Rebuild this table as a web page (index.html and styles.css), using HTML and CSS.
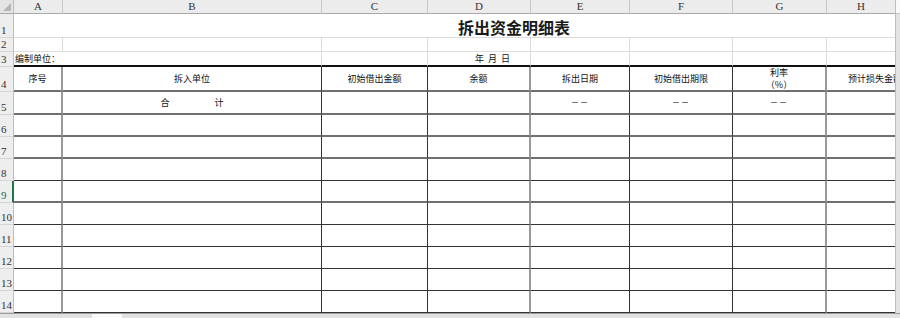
FILE: index.html
```html
<!DOCTYPE html>
<html lang="zh-CN">
<head>
<meta charset="utf-8">
<title>拆出资金明细表</title>
<link rel="stylesheet" href="styles.css">
</head>
<body>
<div class="sheet">
  <div class="main">
    <div class="view">
      <div class="grid">
        <div class="row hdr">
          <div class="corner"><span class="tri"></span></div>
          <div class="ch">A</div><div class="ch">B</div><div class="ch">C</div><div class="ch">D</div>
          <div class="ch">E</div><div class="ch">F</div><div class="ch">G</div><div class="ch">H</div>
        </div>
        <div class="row">
          <div class="rh">1</div>
          <div class="c title">拆出资金明细表</div>
        </div>
        <div class="row g">
          <div class="rh">2</div>
          <div class="c"></div><div class="c"></div><div class="c"></div><div class="c"></div>
          <div class="c"></div><div class="c"></div><div class="c"></div><div class="c"></div>
        </div>
        <div class="row g r3">
          <div class="rh">3</div>
          <div class="c unit">编制单位：</div>
          <div class="c"></div>
          <div class="c date">年 &nbsp;月 &nbsp;日</div>
          <div class="c"></div><div class="c"></div><div class="c"></div><div class="c"></div>
        </div>
        <div class="row tbl soft head">
          <div class="rh">4</div>
          <div class="c">序号</div>
          <div class="c">拆入单位</div>
          <div class="c">初始借出金额</div>
          <div class="c">余额</div>
          <div class="c">拆出日期</div>
          <div class="c">初始借出期限</div>
          <div class="c two"><span>利率</span><span>（%）</span></div>
          <div class="c clip"><span class="hv">预计损失金额</span></div>
        </div>
        <div class="row tbl soft">
          <div class="rh">5</div>
          <div class="c"></div>
          <div class="c total">合 计</div>
          <div class="c"></div><div class="c"></div>
          <div class="c dash">－－</div>
          <div class="c dash">－－</div>
          <div class="c dash">－－</div>
          <div class="c"></div>
        </div>
        <div class="row tbl soft">
          <div class="rh">6</div>
          <div class="c"></div><div class="c"></div><div class="c"></div><div class="c"></div>
          <div class="c"></div><div class="c"></div><div class="c"></div><div class="c"></div>
        </div>
        <div class="row tbl soft">
          <div class="rh">7</div>
          <div class="c"></div><div class="c"></div><div class="c"></div><div class="c"></div>
          <div class="c"></div><div class="c"></div><div class="c"></div><div class="c"></div>
        </div>
        <div class="row tbl">
          <div class="rh">8</div>
          <div class="c"></div><div class="c"></div><div class="c"></div><div class="c"></div>
          <div class="c"></div><div class="c"></div><div class="c"></div><div class="c"></div>
        </div>
        <div class="row tbl soft sel">
          <div class="rh">9</div>
          <div class="c"></div><div class="c"></div><div class="c"></div><div class="c"></div>
          <div class="c"></div><div class="c"></div><div class="c"></div><div class="c"></div>
        </div>
        <div class="row tbl">
          <div class="rh">10</div>
          <div class="c"></div><div class="c"></div><div class="c"></div><div class="c"></div>
          <div class="c"></div><div class="c"></div><div class="c"></div><div class="c"></div>
        </div>
        <div class="row tbl">
          <div class="rh">11</div>
          <div class="c"></div><div class="c"></div><div class="c"></div><div class="c"></div>
          <div class="c"></div><div class="c"></div><div class="c"></div><div class="c"></div>
        </div>
        <div class="row tbl">
          <div class="rh">12</div>
          <div class="c"></div><div class="c"></div><div class="c"></div><div class="c"></div>
          <div class="c"></div><div class="c"></div><div class="c"></div><div class="c"></div>
        </div>
        <div class="row tbl">
          <div class="rh">13</div>
          <div class="c"></div><div class="c"></div><div class="c"></div><div class="c"></div>
          <div class="c"></div><div class="c"></div><div class="c"></div><div class="c"></div>
        </div>
        <div class="row tbl">
          <div class="rh">14</div>
          <div class="c"></div><div class="c"></div><div class="c"></div><div class="c"></div>
          <div class="c"></div><div class="c"></div><div class="c"></div><div class="c"></div>
        </div>
      </div>
    </div>
    <div class="vscroll"><span class="vtop"></span><span class="vbot"></span></div>
  </div>
  <div class="hstrip"><span class="tabgap"></span><span class="tab"></span></div>
</div>
</body>
</html>
```

FILE: styles.css
```css
* { box-sizing: border-box; }
html, body {
  margin: 0;
  padding: 0;
  width: 900px;
  height: 318px;
  overflow: hidden;
  background: #fff;
}
.sheet {
  display: flex;
  flex-direction: column;
  width: 900px;
  height: 318px;
  font-family: "Noto Sans CJK SC", "Noto Sans", sans-serif;
  color: #111;
}
.main {
  display: flex;
  height: 313px;
}
.view {
  width: 895px;
  height: 313px;
  overflow: hidden;
}
.grid {
  display: grid;
  grid-template-columns: 14px 49px 259px 106px 103px 99px 103px 94px 69px;
  grid-template-rows: 14px 24px 14px 15px 25px 23px repeat(9, 22px);
  width: 896px;
}
.row { display: contents; }

/* headers */
.corner {
  background: #e4e4e4;
  border-right: 1px solid #bdbdbd;
  border-bottom: 1px solid #a9a9a9;
  display: flex;
  align-items: flex-end;
  justify-content: flex-end;
  padding: 0 2px 2px 0;
}
.tri {
  width: 0;
  height: 0;
  border-left: 8px solid transparent;
  border-bottom: 8px solid #b5b5b5;
}
.ch {
  background: #ececec;
  border-right: 1px solid #c9c9c9;
  border-bottom: 1px solid #a9a9a9;
  font-family: "Liberation Serif", serif;
  font-size: 11px;
  line-height: 13px;
  color: #333;
  text-align: center;
}
.rh {
  background: #eeeeee;
  border-right: 1px solid #bdbdbd;
  border-bottom: 1px solid #d4d4d4;
  font-family: "Liberation Serif", serif;
  font-size: 11px;
  line-height: 11px;
  color: #333;
  display: flex;
  align-items: flex-end;
  padding-left: 1px;
  padding-bottom: 1px;
}
.sel .rh {
  color: #217346;
  border-right: 2px solid #217346;
}

/* cells */
.c {
  font-size: 9px;
  line-height: 10px;
  white-space: nowrap;
  display: flex;
  align-items: center;
  justify-content: center;
}
.title {
  grid-column: span 8;
  border-bottom: 1px solid #dcdcdc;
  justify-content: flex-start;
  padding-left: 444px;
  padding-top: 2px;
  font-size: 16px;
  font-weight: bold;
  color: #1a1a1a;
}
.g .c {
  border-right: 1px solid #dcdcdc;
  border-bottom: 1px solid #dcdcdc;
}
.r3 .c {
  border-bottom: 2px solid #111;
}
.unit {
  grid-column: span 2;
  justify-content: flex-start;
  padding-left: 1px;
  padding-top: 1px;
}
.date {
  justify-content: flex-start;
  padding-left: 47px;
  padding-top: 1px;
  overflow: visible;
}

/* bordered table */
.tbl .c {
  border-right: 1px solid #333;
  border-bottom: 1px solid #333;
}
.tbl.soft .c {
  border-bottom: 2px solid #707070;
}
.tbl > :nth-child(2),
.tbl > :nth-child(5),
.tbl > :nth-child(8) {
  border-right: 2px solid #9a9a9a;
}
.tbl > :nth-child(9) {
  border-right: none;
}
.two {
  flex-direction: column;
  gap: 2px;
  line-height: 10px;
}
.clip {
  justify-content: flex-start;
  padding-left: 21px;
  overflow: hidden;
}
.hv {
  flex: none;
}
.total {
  word-spacing: 43px;
}
.dash {
  font-size: 8px;
  letter-spacing: 1px;
  padding-bottom: 1px;
}

/* scroll areas */
.vscroll {
  width: 5px;
  height: 313px;
  background: #e3e3e3;
  border-left: 1px solid #bdbdbd;
  display: flex;
  flex-direction: column;
  justify-content: space-between;
}
.vtop {
  height: 14px;
  background: #fafafa;
  border-bottom: 1px solid #c6c6c6;
}
.vbot {
  height: 4px;
}
.hstrip {
  height: 5px;
  display: flex;
  background: #e2e2e2;
  border-top: 1px solid #9c9c9c;
}
.tabgap { width: 92px; }
.tab {
  width: 30px;
  background: #fbfbfb;
}
```
